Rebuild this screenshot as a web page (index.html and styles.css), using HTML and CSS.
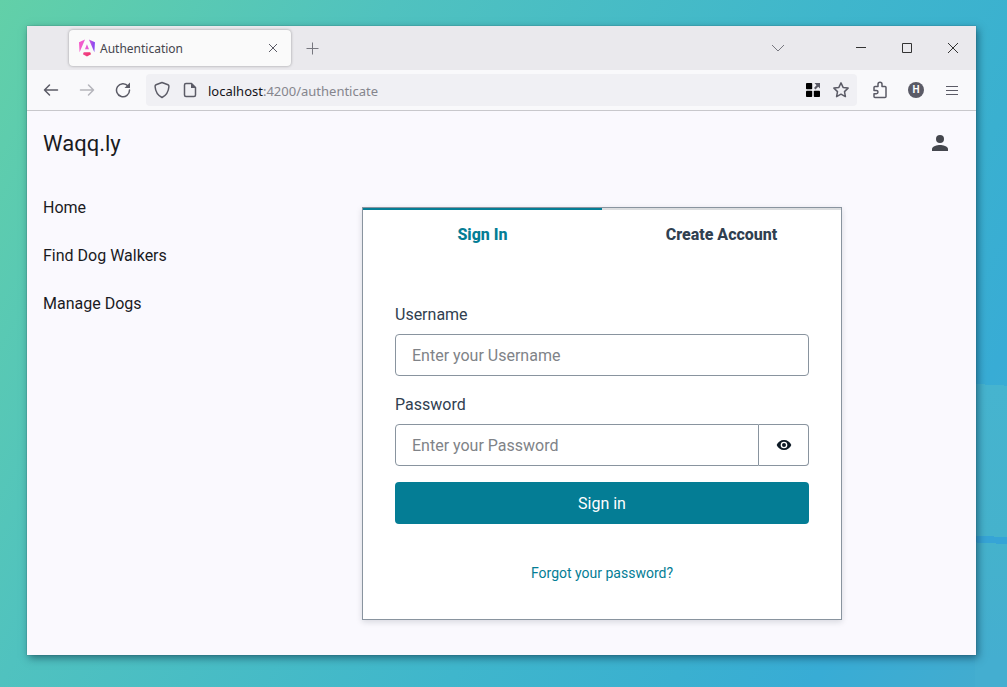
FILE: index.html
```html
<!DOCTYPE html>
<html lang="en">
<head>
<meta charset="utf-8">
<title>Authentication</title>
<link rel="stylesheet" href="styles.css">
</head>
<body>
<div class="window">
  <div class="tabstrip">
    <div class="browser-tab">
      <svg class="favicon" width="16" height="18" viewBox="0 0 223 236" aria-hidden="true">
        <defs><linearGradient id="ng" gradientUnits="userSpaceOnUse" x1="0" y1="60" x2="223" y2="60"><stop offset="0" stop-color="#f65bc8"/><stop offset=".55" stop-color="#e65ad6"/><stop offset="1" stop-color="#7b45f5"/></linearGradient>
        <linearGradient id="nr" x1="0" y1="0" x2="1" y2="0"><stop offset="0" stop-color="#f0448f"/><stop offset="1" stop-color="#f0346a"/></linearGradient></defs>
        <path class="shield" d="m222 39-8 137L138 0zM0 39l8 137L84 0zM83 134h56l-28-67z"/>
        <path class="base" d="M168 205l-57 32-57-32 12-28h90z"/>
      </svg>
      <span class="tab-title">Authentication</span>
      <button class="tab-close" aria-label="Close tab"><svg width="10" height="10" viewBox="0 0 10 10"><path d="M1 1l8 8M9 1L1 9"/></svg></button>
    </div>
    <button class="tool" aria-label="New tab"><svg width="13" height="13" viewBox="0 0 13 13"><path class="muted" d="M6.500 .5v12M.5 6.500h12"/></svg></button>
    <button class="list-tabs" aria-label="List all tabs"><svg width="14" height="8" viewBox="0 0 14 8"><path class="muted" d="M1 1l6 6 6-6"/></svg></button>
    <div class="window-controls">
      <button aria-label="Minimize"><svg width="10" height="10" viewBox="0 0 10 10"><path d="M0 4.500h10"/></svg></button>
      <button aria-label="Maximize"><svg width="10" height="10" viewBox="0 0 10 10"><path d="M.5.5h9v9h-9z"/></svg></button>
      <button aria-label="Close"><svg width="10" height="10" viewBox="0 0 10 10"><path d="M0 0l10 10M10 0L0 10"/></svg></button>
    </div>
  </div>

  <div class="toolbar">
    <button class="tool" aria-label="Back"><svg width="16" height="16" viewBox="0 0 16 16"><path class="bold" d="M14.500 8H1.500M6.500 3L1.500 8l5 5"/></svg></button>
    <button class="tool faded" aria-label="Forward"><svg width="16" height="16" viewBox="0 0 16 16"><path class="bold" d="M1.500 8h13M9.500 3l5 5-5 5"/></svg></button>
    <button class="tool" aria-label="Reload"><svg width="16" height="16" viewBox="0 0 16 16"><path class="bold" d="M13 4A6.500 6.500 0 1 0 14.500 8"/><path class="solid" d="M15 .5v5.500h-5.500z"/></svg></button>
    <div class="urlbar">
      <button class="url-icon" aria-label="Tracking protection"><svg width="16" height="18" viewBox="0 0 16 18"><path class="bold" d="M8 1.500l6 2.200c.9.400 1 1 .9 2C14.500 10.500 12 14.500 8 16.500 4 14.500 1.500 10.500 1.100 5.700c-.1-1 0-1.600.9-2z"/></svg></button>
      <button class="url-icon" aria-label="Site information"><svg width="14" height="16" viewBox="0 0 14 16"><path class="bold" d="M3 1.500h5.500l4 4V13c0 1-.5 1.500-1.500 1.500H3c-1 0-1.500-.5-1.500-1.500V3c0-1 .5-1.500 1.500-1.500z"/><path class="solid" d="M8 1v5h5z"/></svg></button>
      <div class="url" role="textbox" aria-label="Address" contenteditable="true" spellcheck="false"><span class="host">localhost</span>:4200/authenticate</div>
      <button class="url-icon" aria-label="Containers"><svg width="14" height="14" viewBox="0 0 14 14"><g fill="#000"><rect width="6.200" height="6.200" rx=".8"/><rect y="7.800" width="6.200" height="6.200" rx=".8"/><rect x="7.800" y="7.800" width="6.200" height="6.200" rx=".8"/></g><path class="solid" d="M8.500 0H14v5.500l-1.800-1.800-2.700 2.700L8 5l2.500-2.800z"/></svg></button>
      <button class="url-icon" aria-label="Bookmark this page"><svg width="16" height="16" viewBox="0 0 16 16"><path class="bold" d="M8 .9l2.100 4.500 5 .7-3.600 3.500.9 5L8 12.200l-4.400 2.400.9-5L.9 6.100l5-.7z"/></svg></button>
    </div>
    <button class="tool" aria-label="Extensions"><svg width="14" height="18" viewBox="0 0 14 18"><path class="bold" d="M2 5.500h3V3.300a2 2 0 0 1 4 0v2.200h3c.7 0 1 .3 1 1v9c0 .7-.3 1-1 1H2c-.7 0-1-.3-1-1v-2.700h2.300a1.700 1.700 0 0 0 0-3.400H1V6.500c0-.7.3-1 1-1z"/></svg></button>
    <button class="tool" aria-label="Account H"><span class="avatar">H</span></button>
    <button class="tool" aria-label="Menu"><svg width="12" height="11" viewBox="0 0 12 11"><path d="M0 1.500h12M0 5.500h12M0 9.500h12"/></svg></button>
  </div>

  <div class="page">
    <header class="app-header">
      <h1 class="brand">Waqq.ly</h1>
      <button class="profile" aria-label="Profile"><svg width="24" height="24" viewBox="0 0 24 24"><circle cx="12" cy="8" r="4"/><path d="M12 14c-2.700 0-8 1.300-8 4v2h16v-2c0-2.700-5.300-4-8-4z"/></svg></button>
    </header>
    <div class="app-body">
      <nav class="sidenav">
        <a href="#home">Home</a>
        <a href="#walkers">Find Dog Walkers</a>
        <a href="#dogs">Manage Dogs</a>
      </nav>
      <main class="content">
        <section class="card">
          <div class="auth-tabs" role="tablist">
            <button class="auth-tab active" role="tab" aria-selected="true">Sign In</button>
            <button class="auth-tab" role="tab" aria-selected="false">Create Account</button>
          </div>
          <form class="auth-form">
            <div class="field">
              <label for="username">Username</label>
              <input id="username" type="text" placeholder="Enter your Username">
            </div>
            <div class="field">
              <label for="password">Password</label>
              <div class="password-row">
                <input id="password" type="password" placeholder="Enter your Password">
                <button type="button" class="reveal" aria-label="Show password"><svg width="16" height="16" viewBox="0 0 24 24"><path d="M12 4.500C7 4.500 2.700 7.600 1 12c1.700 4.400 6 7.500 11 7.500s9.300-3.100 11-7.500c-1.700-4.400-6-7.500-11-7.500zM12 17a5 5 0 1 1 0-10 5 5 0 0 1 0 10zm0-8a3 3 0 1 0 0 6 3 3 0 0 0 0-6z"/></svg></button>
              </div>
            </div>
            <button type="button" class="submit">Sign in</button>
          </form>
          <div class="card-footer"><a href="#forgot">Forgot your password?</a></div>
        </section>
      </main>
    </div>
  </div>
</div>
</body>
</html>
```
FILE: styles.css
```css
* { box-sizing: border-box; }
body {
  margin: 0;
  min-height: 100vh;
  padding: 26px 31px 32px 27px;
  display: flex;
  font-family: Roboto, "Liberation Sans", sans-serif;
  background:
    linear-gradient(183deg, transparent 0 56%, #46b4cf 56%, #45b2cc 78%, #36a4d6 78% 79%, #45b2cc 79%, #44aed0 96%) right / 32px 100% no-repeat,
    linear-gradient(120deg, #62d0a8 0%, #50c2bf 28%, #3fb6cc 60%, #3ab0d0 76%, #38acd5 86%, #44acce 100%);
}
button { border: 0; padding: 0; background: none; font: inherit; color: inherit; cursor: pointer; }
svg { display: block; }
a { text-decoration: none; }

.window {
  flex: 1;
  display: flex;
  flex-direction: column;
  background: #faf9fe;
  box-shadow: 0 0 1px rgba(40, 70, 80, .6), 2px 3px 8px rgba(0, 30, 50, .5);
}

/* Browser chrome */
.tabstrip, .toolbar { display: flex; align-items: center; color: #5b5b66; }
.tabstrip path, .toolbar path { fill: none; stroke: currentColor; stroke-width: 1; }
.tabstrip { height: 44px; padding-left: 42px; background: #eae9ed; font-family: "Noto Sans", sans-serif; }
.favicon .shield { fill: url(#ng); stroke: none; }
.favicon .base { fill: url(#nr); stroke: none; }
.tabstrip .favicon path { stroke: none; }
.tabstrip .favicon .shield { fill: url(#ng); }
.tabstrip .favicon .base { fill: url(#nr); }
.tabstrip .muted { stroke: #77777f; }
.toolbar .bold { stroke-width: 1.5px; stroke-linecap: round; stroke-linejoin: round; }
.toolbar .solid { fill: currentColor; stroke: none; }
.browser-tab {
  width: 222px;
  height: 36px;
  padding: 0 10px;
  display: flex;
  align-items: center;
  gap: 5px;
  border-radius: 4px;
  background: #fafafa;
  box-shadow: 0 0 3px rgba(0, 0, 0, .35);
}
.tab-title { flex: 1; font-size: 12px; color: #45454d; }
.tab-close { width: 16px; height: 16px; display: grid; place-items: center; }
.tool { width: 36px; height: 36px; display: grid; place-items: center; flex: none; }
.tabstrip .tool { margin-left: 3px; }
.list-tabs { width: 36px; height: 36px; margin-left: auto; display: grid; place-items: center; }
.window-controls { display: flex; margin-left: 42px; color: #333; }
.window-controls button { width: 46px; height: 44px; display: grid; place-items: center; }

.toolbar { height: 41px; padding: 0 6px; background: #f9f9fb; border-bottom: 1px solid #c8c8cc; }
.faded { color: #b5b5bb; }
.urlbar {
  flex: 1;
  height: 32px;
  margin: 0 5px;
  padding: 0 2px;
  display: flex;
  align-items: center;
  border-radius: 4px;
  background: #f0f0f4;
}
.url-icon { width: 28px; height: 28px; display: grid; place-items: center; }
.url { flex: 1; padding: 2px 0 0 4px; font: 13px "Noto Sans", sans-serif; color: #85858d; outline: 0; white-space: nowrap; }
.host { color: #15141a; }
.avatar {
  width: 16px;
  height: 16px;
  border-radius: 50%;
  background: #5b5b66;
  color: #fff;
  font-size: 10px;
  font-weight: 700;
  line-height: 16px;
}

/* Application */
.page { flex: 1; display: flex; flex-direction: column; }
.app-header { height: 64px; padding: 0 12px 0 16px; display: flex; align-items: center; justify-content: space-between; }
.brand { margin: 0; font-size: 22px; font-weight: 400; color: #1a1b1f; }
.profile { width: 48px; height: 48px; display: grid; place-items: center; fill: #44474e; }
.app-body { flex: 1; display: flex; }
.sidenav { width: 201px; padding: 9px 16px; display: flex; flex-direction: column; }
.sidenav a { font-size: 16px; line-height: 48px; color: #1a1b1f; }
.content { flex: 1; padding: 32px 16px; display: flex; justify-content: center; align-items: flex-start; }
.card {
  width: 480px;
  background: #fff;
  border: 1px solid #89949f;
  box-shadow: 0 2px 6px rgba(13, 26, 38, .15);
  color: #304050;
  font-size: 16px;
}
.auth-tabs { display: flex; }
.auth-tab { flex: 1; height: 50px; border-top: 2px solid #dcdee0; font-weight: 800; }
.auth-tab.active { border-color: #047d95; color: #047d95; }
.auth-form { padding: 45px 32px 32px; display: flex; flex-direction: column; gap: 16px; }
.field { display: flex; flex-direction: column; gap: 7px; line-height: 24px; }
.field + .field { padding-top: 1px; }
.field input {
  width: 100%;
  height: 42px;
  padding: 0 16px;
  border: 1px solid #89949f;
  border-radius: 4px;
  background: #fff;
  font: inherit;
  color: #0d1a26;
}
.field input::placeholder { color: #808388; }
.password-row { display: flex; }
.password-row input { flex: 1; border-radius: 4px 0 0 4px; }
.reveal {
  width: 50px;
  height: 42px;
  display: grid;
  place-items: center;
  border: 1px solid #89949f;
  border-left: 0;
  border-radius: 0 4px 4px 0;
  fill: #0d1a26;
}
.submit { height: 42px; border-radius: 4px; background: #047d95; color: #fff; }
.card-footer { padding-bottom: 29px; text-align: center; font-size: 14px; line-height: 34px; }
.card-footer a { color: #047d95; }
```
